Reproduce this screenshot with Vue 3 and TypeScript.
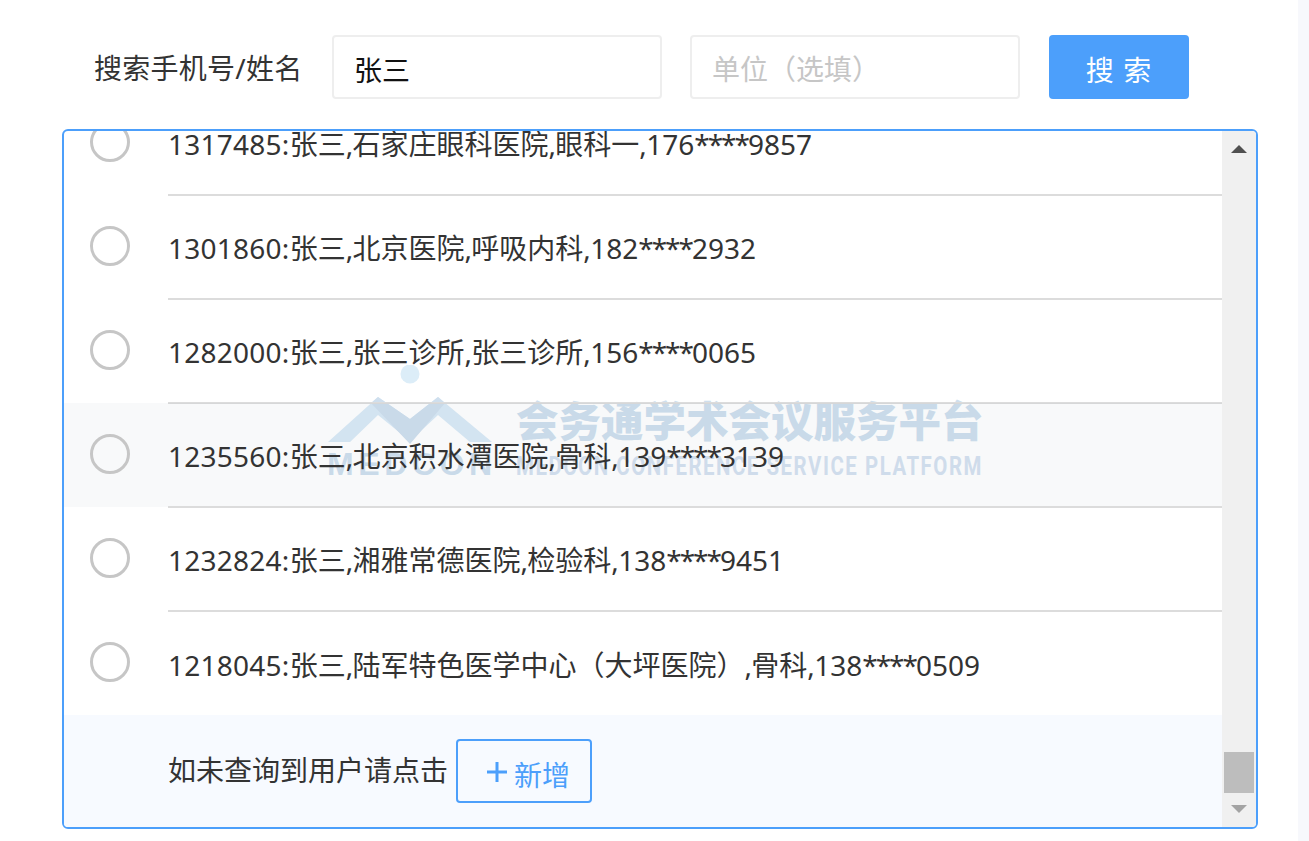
<script setup lang="ts">
interface Token {
  value: string
  kind: 'id' | 'comma' | 'stars' | 'plain'
}

const texts = [
  '1317485:张三,石家庄眼科医院,眼科一,176****9857',
  '1301860:张三,北京医院,呼吸内科,182****2932',
  '1282000:张三,张三诊所,张三诊所,156****0065',
  '1235560:张三,北京积水潭医院,骨科,139****3139',
  '1232824:张三,湘雅常德医院,检验科,138****9451',
  '1218045:张三,陆军特色医学中心（大坪医院）,骨科,138****0509',
]

function tokenize(text: string): Token[] {
  return text
    .split(/(\d+:|,|\*+)/)
    .filter(Boolean)
    .map((value) => ({
      value,
      kind: /:$/.test(value) ? 'id' : value === ',' ? 'comma' : value[0] === '*' ? 'stars' : 'plain',
    }))
}

const rows = texts.map((text, i) => ({ text, tokens: tokenize(text), hover: i === 3 }))
</script>

<template>
  <div class="page">
    <main class="content">
      <form class="search" @submit.prevent>
        <label class="search-label" for="kw">搜索手机号/姓名</label>
        <input id="kw" class="field" type="text" value="张三" />
        <input class="field" type="text" placeholder="单位（选填）" />
        <button class="search-btn" type="submit">搜 索</button>
      </form>

      <section class="results">
        <div class="watermark" aria-hidden="true">
          <div class="wm-logo">
            <svg viewBox="0 0 172 82" width="172" height="82">
              <circle cx="85" cy="9" r="9.5" fill="#dcedf8" />
              <path d="M3 77 53 32 85 54 113 32 167 77H145L113 50 85 76 53 50 25 77Z" fill="#d9eaf6" />
              <path d="M53 32 85 54 113 32 120 38 85 79 46 38Z" fill="#cfdfee" />
            </svg>
            <div class="wm-brand">MEDCON</div>
          </div>
          <div class="wm-text">
            <div class="wm-cn">会务通学术会议服务平台</div>
            <div class="wm-en">MEDCON CONFERENCE SERVICE PLATFORM</div>
          </div>
        </div>

        <div class="viewport">
          <div
            v-for="(row, i) in rows"
            :key="row.text"
            class="row"
            :class="{ hover: row.hover }"
          >
            <span class="radio"></span>
            <div class="row-body" :class="{ last: i === rows.length - 1 }">
              <span class="row-text"><span
                v-for="(t, j) in row.tokens"
                :key="j"
                :class="t.kind"
              >{{ t.value }}</span></span>
            </div>
          </div>
          <div class="footer">
            <span class="footer-text">如未查询到用户请点击</span>
            <button class="add-btn" type="button">
              <svg class="plus" viewBox="0 0 20 20" width="20" height="20" aria-hidden="true">
                <path d="M10 0v20M0 10h20" fill="none" stroke="currentColor" stroke-width="3" />
              </svg>
              <span class="add-label">新增</span>
            </button>
          </div>
        </div>

        <div class="scrollbar" aria-hidden="true">
          <span class="arrow up"></span>
          <span class="track"><span class="thumb"></span></span>
          <span class="arrow down"></span>
        </div>
      </section>
    </main>
    <aside class="strip"></aside>
  </div>
</template>

<style>
html,
body {
  margin: 0;
  background: #fff;
}
</style>

<style scoped>
.page {
  display: flex;
  height: 841px;
  overflow: hidden;
  font-family: "Noto Sans", "Noto Sans CJK SC", sans-serif;
  font-size: 28px;
  color: #333;
}
.content {
  width: 1298px;
  flex: none;
  padding: 35px 0 0 62px;
  box-sizing: border-box;
}
.strip {
  flex: 1;
  background: #f7f8fc;
}
.search {
  display: flex;
  align-items: center;
  height: 64px;
  margin-bottom: 30px;
  padding-left: 32px;
}
.search-label {
  width: 238px;
  flex: none;
  color: #333;
  letter-spacing: 0.25px;
  white-space: nowrap;
}
.field {
  width: 330px;
  height: 64px;
  box-sizing: border-box;
  margin-right: 28px;
  padding: 4px 20px 0;
  border: 2px solid #eee;
  border-radius: 4px;
  background: #fff;
  color: #111;
  font: inherit;
  outline: none;
}
.field::placeholder {
  color: #c6c6c6;
  opacity: 1;
}
.search-btn {
  width: 140px;
  height: 64px;
  margin-left: 1px;
  padding: 4px 0 0;
  border: 0;
  border-radius: 4px;
  background: #4c9ffb;
  color: #fff;
  font: inherit;
  letter-spacing: 1px;
}
.results {
  position: relative;
  display: flex;
  width: 1196px;
  height: 700px;
  box-sizing: border-box;
  border: 2px solid #4c9ffb;
  border-radius: 6px;
  overflow: hidden;
}
.viewport {
  position: relative;
  flex: 1;
  min-width: 0;
  display: flex;
  flex-direction: column;
  justify-content: flex-end;
  overflow: hidden;
}
.row {
  flex: none;
  height: 104px;
  display: flex;
  align-items: flex-start;
  padding-left: 26px;
}
.row.hover {
  background: rgba(30, 60, 110, 0.03);
}
.radio {
  flex: none;
  width: 40px;
  height: 40px;
  box-sizing: border-box;
  margin: 31px 38px 0 0;
  border: 3px solid #c6c6c6;
  border-radius: 50%;
}
.row-body {
  flex: 1;
  height: 105px;
  box-sizing: border-box;
  display: flex;
  align-items: center;
  border-bottom: 2px solid #dcdcdc;
  white-space: nowrap;
}
.row-body.last {
  height: 104px;
  border-bottom: 0;
}
.row-text {
  position: relative;
  top: 0.5px;
}
.id {
  letter-spacing: 0.25px;
}
.comma {
  letter-spacing: -0.67px;
}
.stars {
  letter-spacing: -2px;
}
.footer {
  flex: none;
  height: 112px;
  box-sizing: border-box;
  display: flex;
  align-items: center;
  gap: 8px;
  padding-left: 104px;
  background: #f7faff;
}
.footer-text {
  margin-bottom: 4px;
}
.add-btn {
  width: 136px;
  height: 64px;
  display: inline-flex;
  align-items: center;
  gap: 7px;
  box-sizing: border-box;
  padding: 0 0 0 29px;
  border: 2px solid #4c9ffb;
  border-radius: 4px;
  background: transparent;
  color: #4c9ffb;
  font: inherit;
}
.plus {
  flex: none;
  margin-top: 2px;
}
.add-label {
  margin-top: 6px;
}
.scrollbar {
  flex: none;
  width: 34px;
  display: flex;
  flex-direction: column;
  align-items: center;
  background: #f0f0f0;
}
.arrow {
  flex: none;
  width: 0;
  height: 0;
  border-left: 8px solid transparent;
  border-right: 8px solid transparent;
}
.arrow.up {
  margin: 14px 0 0;
  border-bottom: 8px solid #505050;
}
.arrow.down {
  margin: 0 0 14px;
  border-top: 8px solid #a3a3a3;
}
.track {
  flex: 1;
  width: 30px;
  display: flex;
  flex-direction: column;
  justify-content: flex-end;
  padding-bottom: 12px;
}
.thumb {
  display: block;
  height: 41px;
  background: #bdbdbd;
}
.watermark {
  position: absolute;
  left: 261px;
  top: 234px;
  display: flex;
  gap: 15px;
  pointer-events: none;
  font-family: "Liberation Sans", "Noto Sans CJK SC", sans-serif;
  color: #cfdfee;
}
.wm-logo {
  width: 176px;
}
.wm-logo svg {
  display: block;
}
.wm-brand {
  margin: 5px 0 0 2px;
  font-size: 32px;
  line-height: 24px;
  font-weight: 700;
  letter-spacing: 4.6px;
}
.wm-text {
  padding-top: 32px;
  width: 470px;
}
.wm-cn {
  font-family: "Noto Sans CJK SC", sans-serif;
  font-size: 42.5px;
  line-height: 44px;
  font-weight: 900;
  white-space: nowrap;
}
.wm-en {
  margin-top: 13px;
  font-family: "Roboto", sans-serif;
  font-size: 26px;
  line-height: 24px;
  font-weight: 700;
  letter-spacing: 2px;
  white-space: nowrap;
  color: #d5e2f0;
  transform: scaleX(0.783);
  transform-origin: left center;
}
</style>
